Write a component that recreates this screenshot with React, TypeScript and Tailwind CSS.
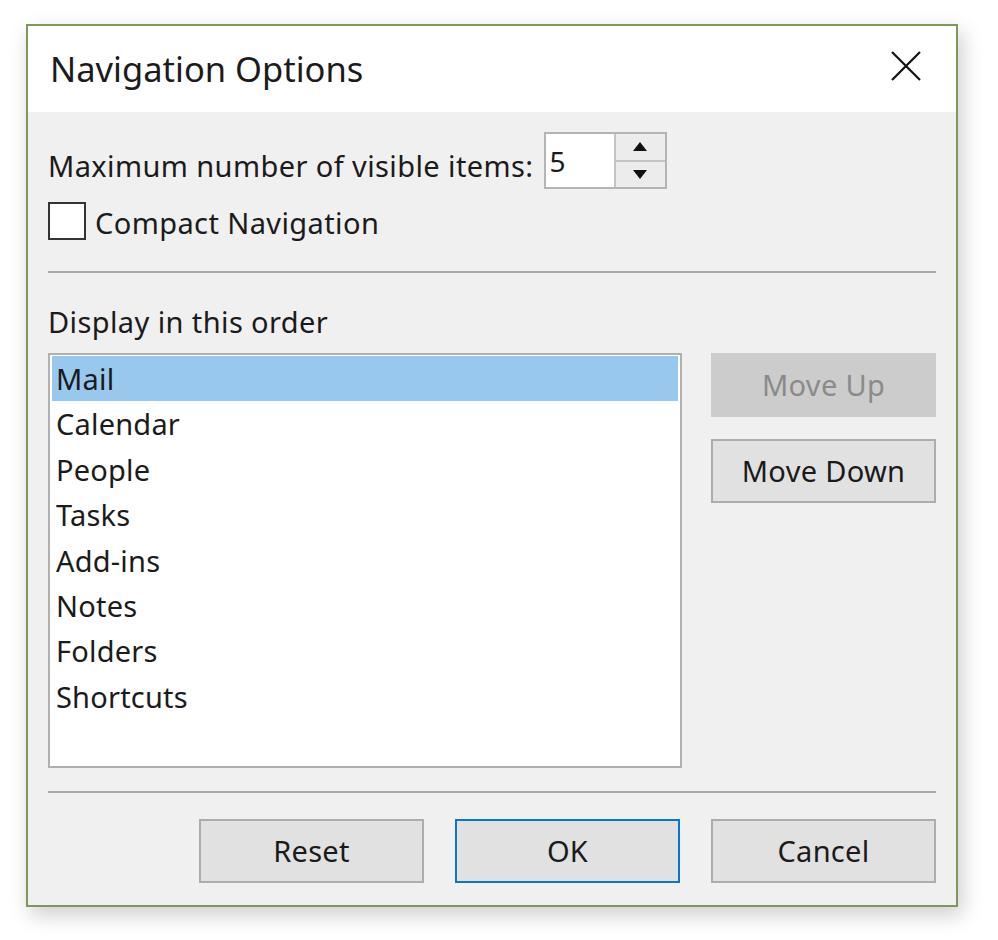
const items = ["Mail", "Calendar", "People", "Tasks", "Add-ins", "Notes", "Folders", "Shortcuts"];

function DialogButton({
  label,
  primary,
  disabled,
}: {
  label: string;
  primary?: boolean;
  disabled?: boolean;
}) {
  const tone = disabled
    ? "border-[#cccccc] bg-[#cccccc] text-[#8a8a8a]"
    : primary
      ? "border-[#0a74d0] bg-[#e1e1e1] text-[#1a1a1a]"
      : "border-[#adadad] bg-[#e1e1e1] text-[#1a1a1a]";
  return (
    <button
      className={`flex h-[64px] w-[225px] items-center justify-center border-2 text-[29px] tracking-[0.3px] ${tone}`}
    >
      {label}
    </button>
  );
}

export default function App() {
  return (
    <div
      className="h-[940px] w-[998px] bg-white pl-[26px] pt-[24px] text-[#1b1b1b]"
      style={{ fontFamily: '"Noto Sans", "Open Sans", sans-serif' }}
    >
      <div className="w-[932px] border-2 border-[#7d985a] shadow-[4px_8px_20px_rgba(0,0,0,0.2)]">
        {/* title bar */}
        <div className="flex h-[86px] items-center justify-between bg-white pl-[22px] pr-[35px]">
          <span className="text-[34.5px] leading-none">Navigation Options</span>
          <svg width="30" height="30" viewBox="0 0 30 30" className="-mt-[6px]">
            <path d="M1 1 L29 29 M29 1 L1 29" stroke="#111" strokeWidth="2.2" fill="none" />
          </svg>
        </div>

        <div className="bg-[#f0f0f0] px-[20px] pb-[22px] pt-[20px] text-[29px] tracking-[0.4px]">
          <div className="flex items-start">
            <span className="mt-[14px] leading-[40px]">Maximum number of visible items:</span>
            <div className="ml-[10px] flex h-[57px] w-[123px] border-2 border-[#b4b4b4] bg-white">
              <div className="flex-1 pl-[4px] text-[28px] leading-[54px]">5</div>
              <div className="flex w-[51px] flex-col border-l-2 border-[#c4c4c4]">
                <div className="flex flex-1 items-center justify-center border-b-2 border-[#c4c4c4] bg-[#ececec]">
                  <svg width="14" height="9" viewBox="0 0 14 9">
                    <path d="M7 0 L14 9 L0 9 Z" fill="#111" />
                  </svg>
                </div>
                <div className="flex flex-1 items-center justify-center bg-[#ececec]">
                  <svg width="14" height="9" viewBox="0 0 14 9">
                    <path d="M0 0 L14 0 L7 9 Z" fill="#111" />
                  </svg>
                </div>
              </div>
            </div>
          </div>

          <div className="mt-[13px] flex items-start">
            <div className="h-[38px] w-[38px] border-2 border-[#333] bg-white" />
            <span className="ml-[9px] mt-[1px] leading-[40px]">Compact Navigation</span>
          </div>

          <div className="mt-[28px] h-[2px] bg-[#a8a8a8]" />

          <div className="mt-[29px] leading-[40px]">Display in this order</div>

          <div className="mt-[11px] flex items-start">
            <div className="h-[415px] w-[634px] border-2 border-[#b0b0b0] bg-white px-[2px] pt-[1px] tracking-[0.2px]">
              {items.map((it, i) => (
                <div
                  key={it}
                  className={`h-[45.4px] pl-[4px] leading-[45px] ${i === 0 ? "bg-[#99c8ef]" : ""}`}
                >
                  {it}
                </div>
              ))}
            </div>
            <div className="ml-[29px] flex flex-col gap-[22px]">
              <DialogButton label="Move Up" disabled />
              <DialogButton label="Move Down" />
            </div>
          </div>

          <div className="mt-[23px] h-[2px] bg-[#a8a8a8]" />

          <div className="mt-[26px] flex justify-end gap-[31px]">
            <DialogButton label="Reset" />
            <DialogButton label="OK" primary />
            <DialogButton label="Cancel" />
          </div>
        </div>
      </div>
    </div>
  );
}
